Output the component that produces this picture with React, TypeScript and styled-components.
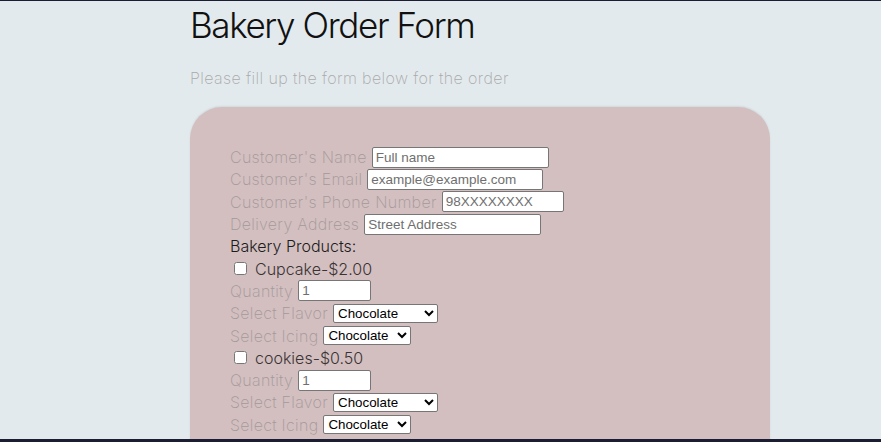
import React from "react";
import styled, { createGlobalStyle } from "styled-components";

const Global = createGlobalStyle`
  html, body { margin: 0; padding: 0; }
  body { background: #e3eaed; }
`;

const Frame = styled.div`
  box-sizing: border-box;
  height: 442px;
  overflow: hidden;
  border-top: 1px solid #1b1e33;
  border-bottom: 3px solid #1b1e33;
  background: #e3eaed;
  font-family: Inter, "Noto Sans", sans-serif;
`;

const Container = styled.div`
  width: 580px;
  margin-left: 190px;
`;

const Title = styled.h1`
  margin: 0;
  padding-top: 2px;
  font-size: 35px;
  font-weight: 300;
  line-height: 44px;
  color: #111;
  letter-spacing: -1.4px;
`;

const Subtitle = styled.p`
  margin: 19px 0 0;
  font-size: 16px;
  font-weight: 200;
  line-height: 24px;
  color: #a9a9a9;
  letter-spacing: 0.4px;
`;

const Card = styled.form`
  margin-top: 17px;
  background: #d3bfc0;
  border-radius: 32px;
  padding: 39px 40px 40px;
  box-shadow: 0 -1px 2px rgba(0, 0, 0, 0.08);
  min-height: 400px;
`;

const Row = styled.div`
  display: flex;
  align-items: center;
  gap: 5px;
  height: 22.3px;
`;

const Label = styled.label<{ $dark?: boolean }>`
  font-size: 16px;
  font-weight: ${(p) => (p.$dark ? 300 : 200)};
  color: ${(p) => (p.$dark ? "#1c1c1c" : "#a3999a")};
  letter-spacing: ${(p) => (p.$dark ? "0" : "0.3px")};
  white-space: nowrap;
`;

const ProductLabel = styled.label`
  display: flex;
  align-items: center;
  font-size: 16px;
  font-weight: 300;
  color: #3a3334;
  gap: 8px;
  padding-left: 4px;
`;

const Check = styled.input`
  margin: 0;
  width: 13px;
  height: 13px;
`;

const TextInput = styled.input<{ $w: number }>`
  box-sizing: border-box;
  width: ${(p) => p.$w}px;
  height: 21px;
  font-family: "Liberation Sans", Arial, sans-serif;
  font-size: 13.5px;
  padding: 1px 3px;
  border: 1px solid #767676;
  border-radius: 2px;
  background: #fff;
  color: #111;
  &::placeholder { color: #6f6f6f; }
`;

const Select = styled.select<{ $w: number }>`
  box-sizing: border-box;
  width: ${(p) => p.$w}px;
  height: 19px;
  font-family: "Liberation Sans", Arial, sans-serif;
  font-size: 13.33px;
  color: #000;
  border: 1px solid #767676;
  border-radius: 2px;
  background: #fff;
`;

const flavors = ["Chocolate", "Vanilla", "Strawberry", "Red Velvet"];
const icings = ["Chocolate", "Vanilla", "Cream"];

function Product({ name }: { name: string }) {
  return (
    <>
      <Row>
        <ProductLabel>
          <Check type="checkbox" />
          {name}
        </ProductLabel>
      </Row>
      <Row>
        <Label>Quantity</Label>
        <TextInput $w={73} type="text" placeholder="1" />
      </Row>
      <Row>
        <Label>Select Flavor</Label>
        <Select $w={105} defaultValue="Chocolate">
          {flavors.map((f) => (
            <option key={f}>{f}</option>
          ))}
        </Select>
      </Row>
      <Row>
        <Label>Select Icing</Label>
        <Select $w={88} defaultValue="Chocolate">
          {icings.map((f) => (
            <option key={f}>{f}</option>
          ))}
        </Select>
      </Row>
    </>
  );
}

export default function App() {
  return (
    <Frame>
      <Global />
      <Container>
        <Title>Bakery Order Form</Title>
        <Subtitle>Please fill up the form below for the order</Subtitle>
        <Card>
          <Row>
            <Label>Customer's Name</Label>
            <TextInput $w={177} placeholder="Full name" />
          </Row>
          <Row>
            <Label>Customer's Email</Label>
            <TextInput $w={176} placeholder="example@example.com" />
          </Row>
          <Row>
            <Label>Customer's Phone Number</Label>
            <TextInput $w={122} placeholder="98XXXXXXXX" />
          </Row>
          <Row>
            <Label>Delivery Address</Label>
            <TextInput $w={177} placeholder="Street Address" />
          </Row>
          <Row>
            <Label $dark>Bakery Products:</Label>
          </Row>
          <Product name="Cupcake-$2.00" />
          <Product name="cookies-$0.50" />
        </Card>
      </Container>
    </Frame>
  );
}
